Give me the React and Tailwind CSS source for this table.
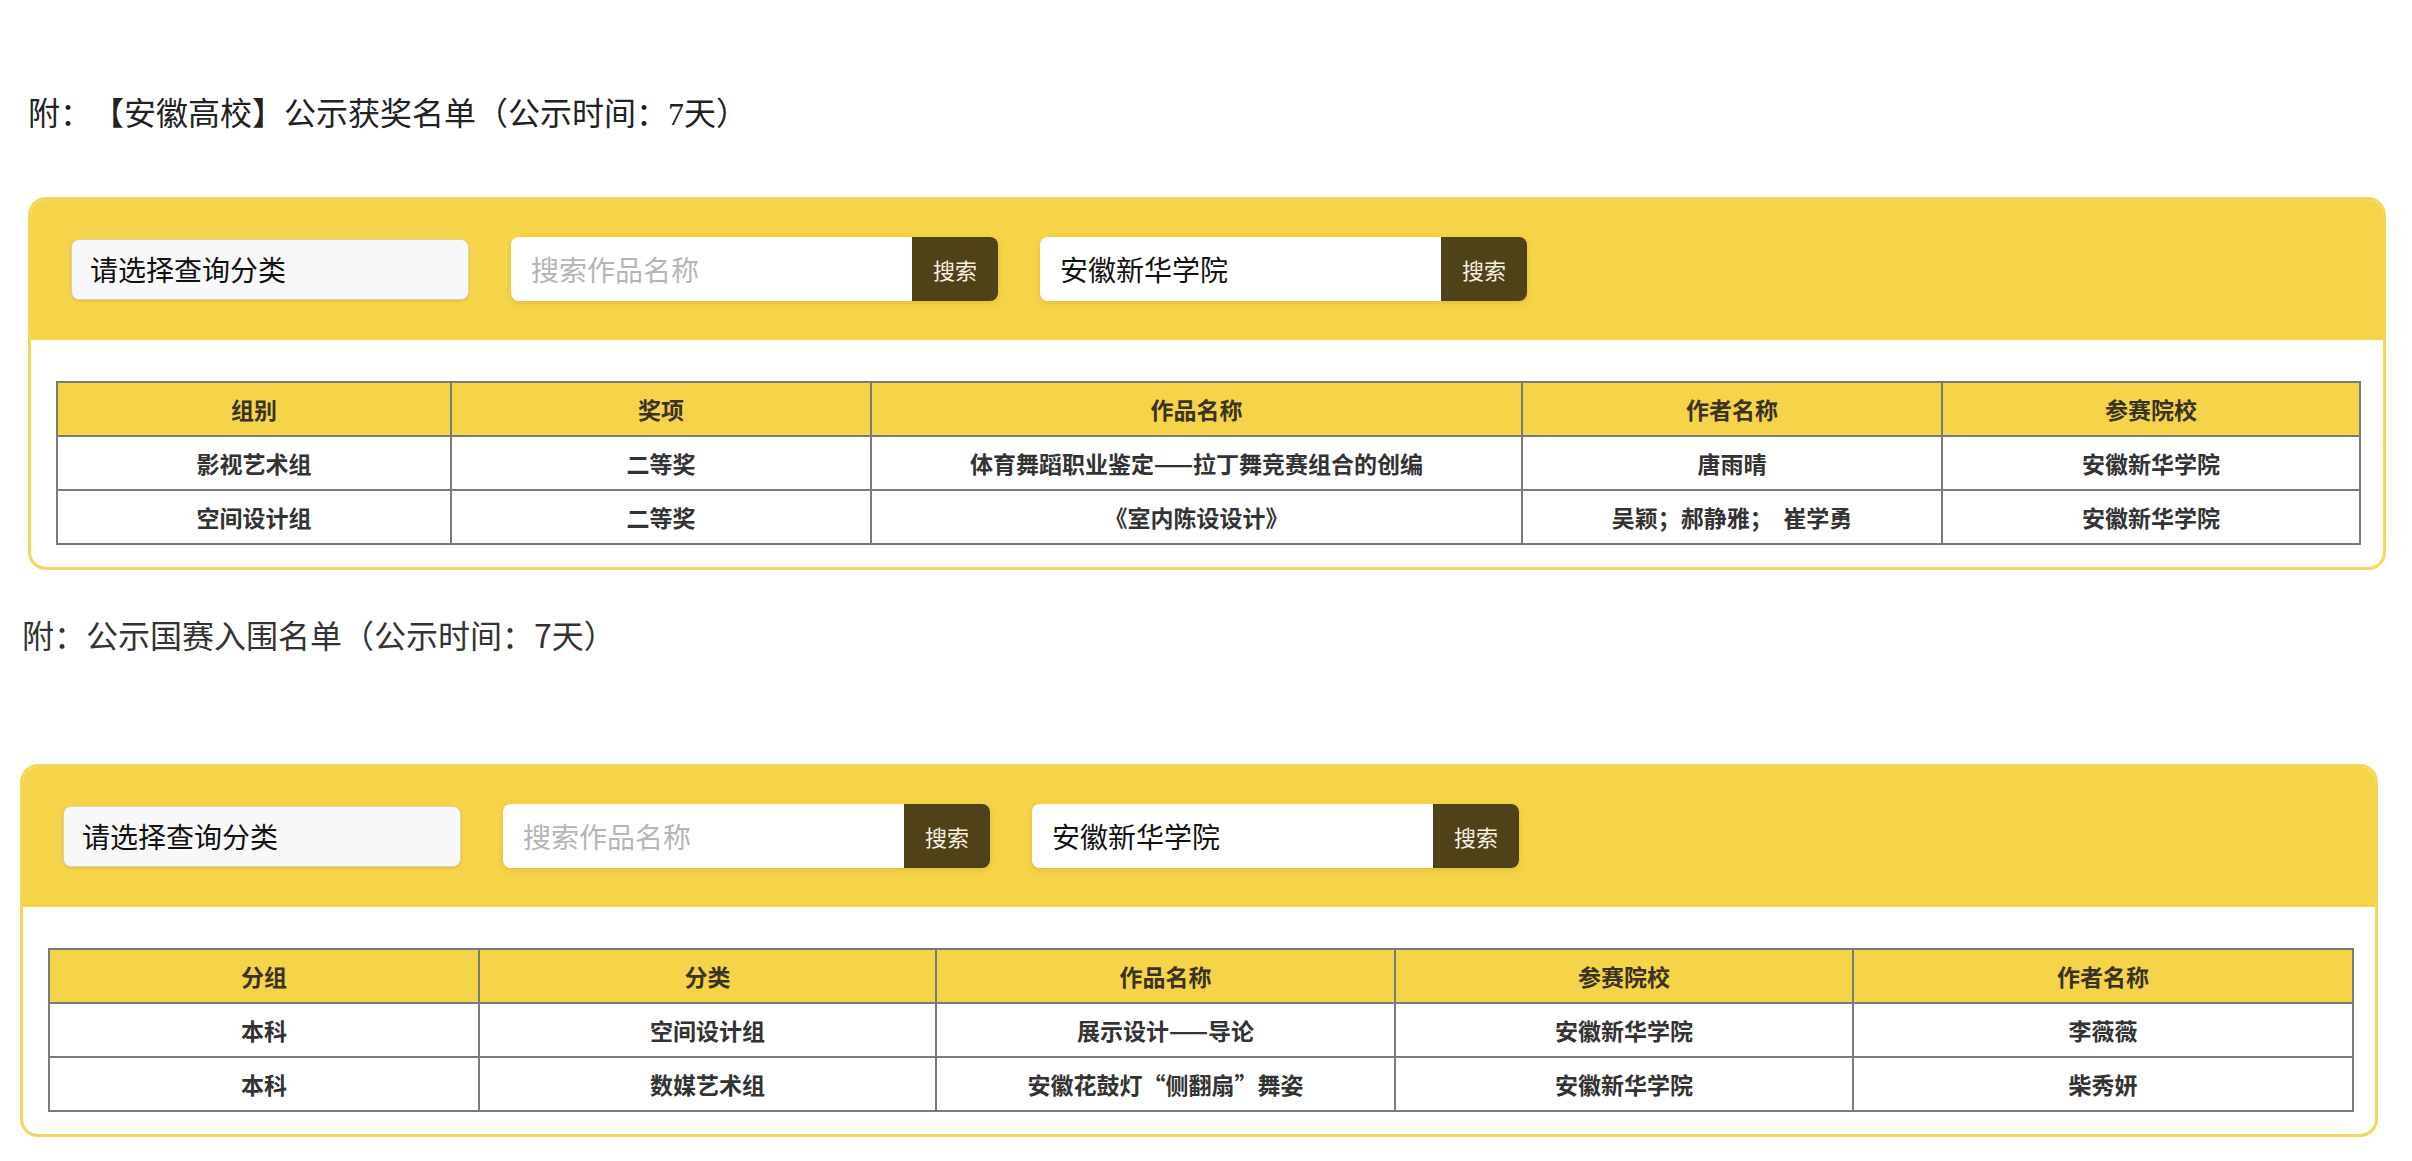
import React from 'react';

const cjk = { fontFamily: '"Noto Sans CJK SC", "Noto Sans", sans-serif' };

const awards = {
  cols: ['组别', '奖项', '作品名称', '作者名称', '参赛院校'],
  widths: ['w-[394px]', 'w-[420px]', 'w-[651px]', 'w-[420px]', 'w-[418px]'],
  rows: [
    ['影视艺术组', '二等奖', '体育舞蹈职业鉴定——拉丁舞竞赛组合的创编', '唐雨晴', '安徽新华学院'],
    ['空间设计组', '二等奖', '《室内陈设设计》', '吴颖；郝静雅；  崔学勇', '安徽新华学院'],
  ],
};

const finals = {
  cols: ['分组', '分类', '作品名称', '参赛院校', '作者名称'],
  widths: ['w-[430px]', 'w-[457px]', 'w-[459px]', 'w-[458px]', 'w-[500px]'],
  rows: [
    ['本科', '空间设计组', '展示设计——导论', '安徽新华学院', '李薇薇'],
    ['本科', '数媒艺术组', '安徽花鼓灯“侧翻扇”舞姿', '安徽新华学院', '柴秀妍'],
  ],
};

function SearchBox({ value, placeholder }) {
  return (
    <div className="flex h-[64px] w-[487px] rounded-lg shadow-[0_2px_6px_rgba(120,90,0,0.18)]">
      <input
        readOnly
        value={value || ''}
        placeholder={placeholder}
        className="flex-1 min-w-0 h-full bg-white rounded-l-lg px-[20px] text-[28px] text-[#111] placeholder:text-[#b5b5b5] outline-none"
        style={cjk}
      />
      <button className="w-[86px] h-full bg-[#4f4118] text-[#f5f0e0] text-[22px] rounded-r-lg" style={cjk}>
        搜索
      </button>
    </div>
  );
}

function Card({ data }) {
  return (
    <div className="w-[2358px] rounded-[18px] border-[3px] border-[#f1d85a] overflow-hidden bg-white">
      <div className="h-[140px] bg-[#f6d449] flex items-center gap-[42px] pl-[40px] pb-[2px]">
        <div
          className="w-[398px] h-[61px] bg-[#f8f8f8] border border-[#ddd3b0] rounded-lg shadow-[0_1px_3px_rgba(0,0,0,0.12)] flex items-center px-[18px] text-[28px] text-[#111]"
          style={cjk}
        >
          请选择查询分类
        </div>
        <SearchBox placeholder="搜索作品名称" />
        <SearchBox value="安徽新华学院" />
      </div>
      <div className="px-[25px] pt-[41px] pb-[22px]">
        <table className="w-[2304px] table-fixed border-collapse border-2 border-[#7a7a7a]" style={cjk}>
          <colgroup>
            {data.widths.map((w, i) => (
              <col key={i} className={w} />
            ))}
          </colgroup>
          <thead>
            <tr className="h-[54px] bg-[#f6d449]">
              {data.cols.map((c) => (
                <th key={c} className="border-2 border-[#7a7a7a] text-[23px] font-bold text-[#3a3320] text-center">
                  {c}
                </th>
              ))}
            </tr>
          </thead>
          <tbody>
            {data.rows.map((r, i) => (
              <tr key={i} className="h-[54px] bg-white">
                {r.map((c, j) => (
                  <td key={j} className="border-2 border-[#7a7a7a] text-[23px] font-bold text-[#333] text-center whitespace-pre">
                    {c}
                  </td>
                ))}
              </tr>
            ))}
          </tbody>
        </table>
      </div>
    </div>
  );
}

export default function App() {
  return (
    <div className="min-h-screen w-[2412px] bg-white pt-[94px] pb-[26px]">
      <h2
        className="ml-[28px] h-[40px] leading-[40px] text-[32px] text-[#222] font-normal [text-spacing-trim:space-all]"
        style={{ fontFamily: '"Liberation Serif", "Noto Sans CJK SC", serif' }}
      >
        附：【安徽高校】公示获奖名单（公示时间：7天）
      </h2>
      <div className="ml-[28px] mt-[63px]">
        <Card data={awards} />
      </div>
      <h2
        className="ml-[22px] mt-[44px] h-[40px] leading-[40px] text-[32px] text-[#333] font-normal [text-spacing-trim:space-all]"
        style={cjk}
      >
        附：公示国赛入围名单（公示时间：7天）
      </h2>
      <div className="ml-[20px] mt-[110px]">
        <Card data={finals} />
      </div>
    </div>
  );
}
